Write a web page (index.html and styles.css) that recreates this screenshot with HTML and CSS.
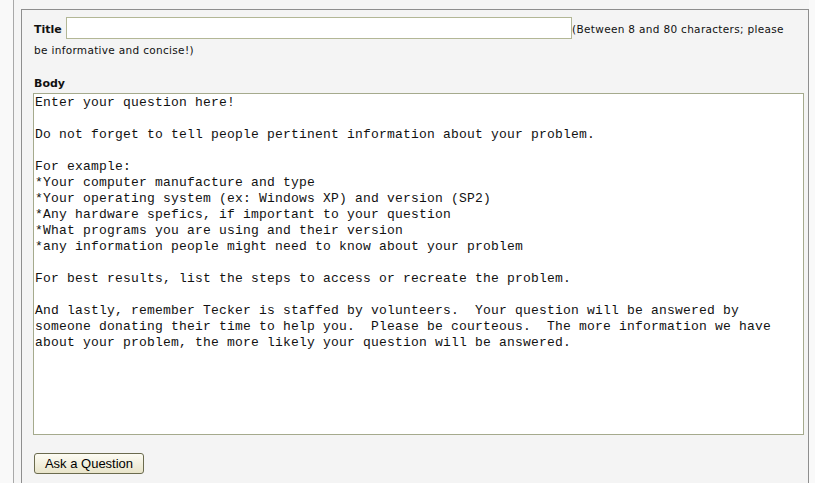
FILE: index.html
```html
<!DOCTYPE html>
<html lang="en">
<head>
  <meta charset="UTF-8">
  <meta name="viewport" content="width=device-width, initial-scale=1.0">
  <title>Ask a Question</title>
  <link rel="stylesheet" href="styles.css">
</head>
<body>
  <div class="page">
    <form class="panel" id="askForm">
      <!-- Titulo de la pregunta -->
      <div class="title-field">
        <label class="label" for="questionTitle">Title</label>
        <input type="text" id="questionTitle" class="title-input"><span class="hint">(Between 8 and 80 characters; please be informative and concise!)</span>
      </div>

      <!-- Cuerpo de la pregunta -->
      <label class="label body-label" for="questionBody">Body</label>
      <textarea id="questionBody" class="body-input">Enter your question here!

Do not forget to tell people pertinent information about your problem.

For example:
*Your computer manufacture and type
*Your operating system (ex: Windows XP) and version (SP2)
*Any hardware spefics, if important to your question
*What programs you are using and their version
*any information people might need to know about your problem

For best results, list the steps to access or recreate the problem.

And lastly, remember Tecker is staffed by volunteers.  Your question will be answered by
someone donating their time to help you.  Please be courteous.  The more information we have
about your problem, the more likely your question will be answered.</textarea>

      <button type="submit" class="ask-button">Ask a Question</button>
    </form>
  </div>
</body>
</html>
```

FILE: styles.css
```css
body {
  margin: 0;
  background: #f9f9f9;
  font-family: "DejaVu Sans", Verdana, sans-serif;
  color: #000;
}
.page {
  margin-left: 13px;
  border-left: 1px solid #a9a9a9;
  padding: 9px 0 0 7px;
  min-height: 474px;
  background: #f5f5f5;
  width: 788px;
}
.panel {
  margin: 0;
  width: 774px;
  min-height: 466px;
  border: 1px solid #8e8e8e;
  border-bottom: none;
  background: #f4f4f4;
  padding: 7px 0 0 12px;
}
.title-field {
  max-width: 760px;
  font-size: 10.5px;
  line-height: 21px;
}
.label {
  font-size: 11px;
  font-weight: bold;
  color: #111;
}
.title-input {
  box-sizing: border-box;
  width: 506px;
  height: 22px;
  margin: 0 0 0 1px;
  padding: 1px 2px;
  border: 1px solid #b3b796;
  background: #fff;
  font-size: 13px;
  vertical-align: baseline;
}
.hint {
  color: #111;
  letter-spacing: 0.32px;
}
.body-label {
  display: block;
  margin-top: 15px;
  line-height: 16px;
}
.body-input {
  display: block;
  box-sizing: border-box;
  width: 771px;
  height: 342px;
  margin: 1px 0 0 -1px;
  padding: 1px;
  border: 1px solid #a5aa8d;
  background: #fff;
  font-family: "Liberation Mono", "Courier New", monospace;
  font-size: 13px;
  line-height: 16px;
  letter-spacing: 0.2px;
  color: #111;
  resize: none;
  outline: none;
}
.ask-button {
  display: block;
  margin-top: 18px;
  width: 110px;
  height: 21px;
  padding: 0;
  border: 1px solid #6b6b4e;
  border-radius: 3px;
  background: linear-gradient(#fdfcf4, #e8e4ca);
  font-family: "Liberation Sans", Arial, sans-serif;
  font-size: 13px;
  color: #000;
  cursor: pointer;
}
```
